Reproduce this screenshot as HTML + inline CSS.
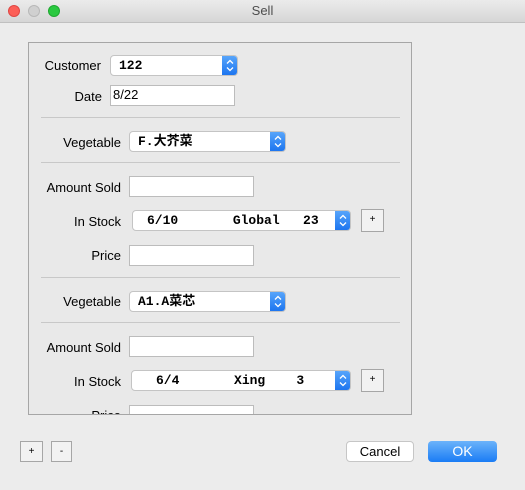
<!DOCTYPE html>
<html><head><style>
body{margin:0;width:525px;height:490px;background:#ececec;font-family:"Liberation Sans","Noto Sans CJK SC",sans-serif;font-size:13px;position:relative;overflow:hidden;color:#000}
.a{position:absolute}
.tb{left:0;top:0;width:525px;height:22px;background:linear-gradient(#ebebeb,#d6d6d6);border-bottom:1px solid #c0c0c0;text-align:center;line-height:22px;color:#4d4d4d}
.dot{width:12px;height:12px;border-radius:50%;top:5px}
.box{left:28px;top:42px;width:384px;height:373px;border:1px solid #a6a6a6;box-sizing:border-box;background:#e9e9e9;overflow:hidden}
.lbl{text-align:right;width:120px;left:0}
.fld{background:#fff;border:1px solid #bcbcbc;box-sizing:border-box}
.pop{background:#fff;border:1px solid #c4c4c4;border-radius:4px;box-sizing:border-box;font-family:"Liberation Mono","Noto Sans CJK SC",monospace;font-weight:bold;font-size:13px;line-height:19px;white-space:pre;overflow:hidden}
.ar{position:absolute;right:-1px;top:-1px;width:16px;height:21px;background:linear-gradient(#5aa7fb,#1a73ef);border-radius:0 4px 4px 0}
.ar svg{position:absolute;left:3px;top:3px}
.sep{left:12px;width:359px;height:1px;background:#c8c8c8}
.sb{background:#f2f2f2;border:1px solid #a6a6a6;box-sizing:border-box;text-align:center;font-size:10px;line-height:20px}
.btn{border-radius:4px;box-sizing:border-box;text-align:center;line-height:19px}
</style></head><body>
<div class="a tb">Sell</div>
<div class="a dot" style="left:8px;background:#fc5f57;border:1px solid #df4744;box-sizing:border-box"></div>
<div class="a dot" style="left:28px;background:#d0d0d0;border:1px solid #b8b8b8;box-sizing:border-box"></div>
<div class="a dot" style="left:48px;background:#2ac940;border:1px solid #1fa831;box-sizing:border-box"></div>
<div class="a box">
 <div class="a lbl" style="width:72px;top:15px">Customer</div>
 <div class="a pop" style="left:81px;top:12px;width:128px;height:21px;padding-left:8px">122<span class="ar"><svg width="10" height="15" viewBox="0 0 10 15"><path d="M2 5.5L5 2.5L8 5.5M2 9.5L5 12.5L8 9.5" fill="none" stroke="#fff" stroke-width="1.3"/></svg></span></div>
 <div class="a lbl" style="width:73px;top:46px">Date</div>
 <div class="a fld" style="left:81px;top:42px;width:125px;height:21px;padding:1px 0 0 2px">8/22</div>
 <div class="a sep" style="top:74px"></div>
 <div class="a lbl" style="width:92px;top:92px">Vegetable</div>
 <div class="a pop" style="left:100px;top:88px;width:157px;height:21px;padding-left:8px">F.大芥菜<span class="ar"><svg width="10" height="15" viewBox="0 0 10 15"><path d="M2 5.5L5 2.5L8 5.5M2 9.5L5 12.5L8 9.5" fill="none" stroke="#fff" stroke-width="1.3"/></svg></span></div>
 <div class="a sep" style="top:119px"></div>
 <div class="a lbl" style="width:92px;top:137px">Amount Sold</div>
 <div class="a fld" style="left:100px;top:133px;width:125px;height:21px"></div>
 <div class="a lbl" style="width:92px;top:171px">In Stock</div>
 <div class="a pop" style="left:103px;top:167px;width:219px;height:21px;padding-left:14px">6/10       Global   23<span class="ar"><svg width="10" height="15" viewBox="0 0 10 15"><path d="M2 5.5L5 2.5L8 5.5M2 9.5L5 12.5L8 9.5" fill="none" stroke="#fff" stroke-width="1.3"/></svg></span></div>
 <div class="a sb" style="left:332px;top:166px;width:23px;height:23px">+</div>
 <div class="a lbl" style="width:92px;top:205px">Price</div>
 <div class="a fld" style="left:100px;top:202px;width:125px;height:21px"></div>
 <div class="a sep" style="top:234px"></div>
 <div class="a lbl" style="width:92px;top:251px">Vegetable</div>
 <div class="a pop" style="left:100px;top:248px;width:157px;height:21px;padding-left:8px">A1.A菜芯<span class="ar"><svg width="10" height="15" viewBox="0 0 10 15"><path d="M2 5.5L5 2.5L8 5.5M2 9.5L5 12.5L8 9.5" fill="none" stroke="#fff" stroke-width="1.3"/></svg></span></div>
 <div class="a sep" style="top:279px"></div>
 <div class="a lbl" style="width:92px;top:297px">Amount Sold</div>
 <div class="a fld" style="left:100px;top:293px;width:125px;height:21px"></div>
 <div class="a lbl" style="width:92px;top:331px">In Stock</div>
 <div class="a pop" style="left:102px;top:327px;width:220px;height:21px;padding-left:24px">6/4       Xing    3<span class="ar"><svg width="10" height="15" viewBox="0 0 10 15"><path d="M2 5.5L5 2.5L8 5.5M2 9.5L5 12.5L8 9.5" fill="none" stroke="#fff" stroke-width="1.3"/></svg></span></div>
 <div class="a sb" style="left:332px;top:326px;width:23px;height:23px">+</div>
 <div class="a lbl" style="width:92px;top:365px">Price</div>
 <div class="a fld" style="left:100px;top:362px;width:125px;height:21px"></div>
</div>
<div class="a sb" style="left:20px;top:441px;width:23px;height:21px">+</div>
<div class="a sb" style="left:51px;top:441px;width:21px;height:21px">-</div>
<div class="a btn" style="left:346px;top:441px;width:68px;height:21px;background:#fff;border:1px solid #c6c6c6">Cancel</div>
<div class="a btn" style="left:428px;top:441px;width:69px;height:21px;background:linear-gradient(#6cb3fa,#1a7cf5);color:#fff;font-size:14px;line-height:21px">OK</div>
</body></html>
